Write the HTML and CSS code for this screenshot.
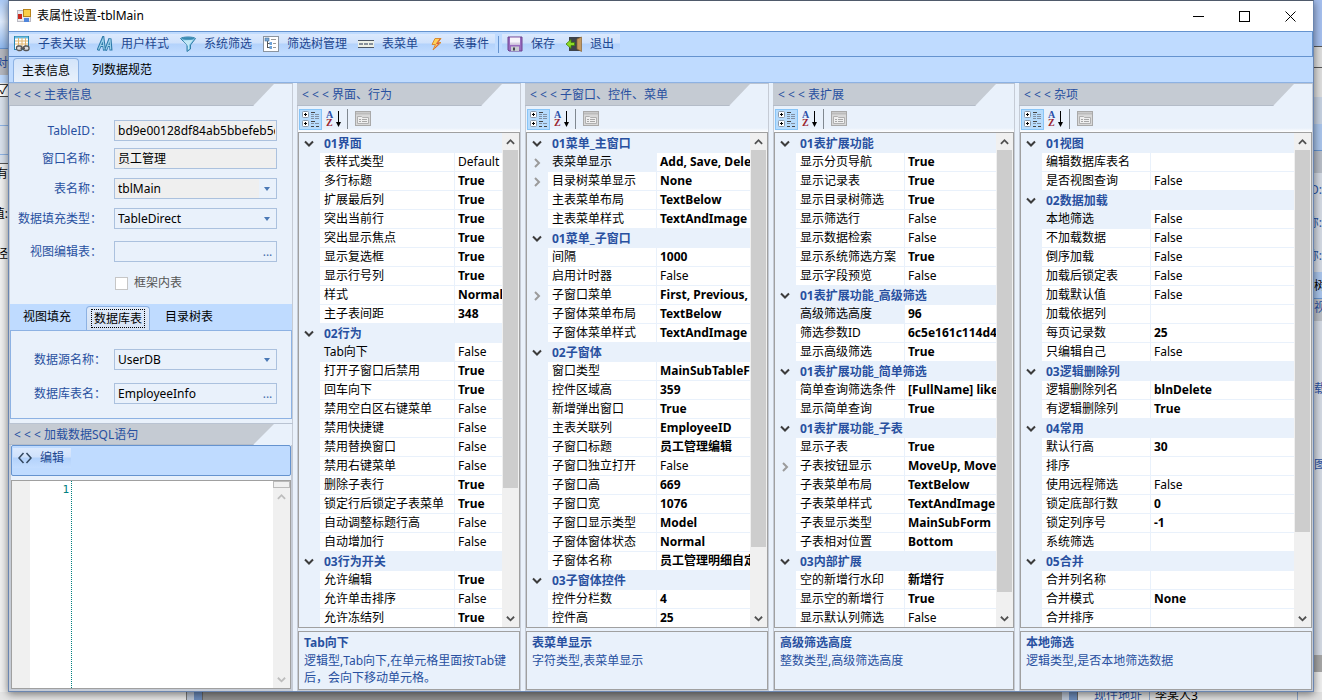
FILE: index.html
```html
<!DOCTYPE html>
<html lang="zh-CN">
<head>
<meta charset="utf-8">
<title>表属性设置-tblMain</title>
<link rel="stylesheet" href="styles.css">
</head>
<body>
<svg class="defs" aria-hidden="true">
  <symbol id="down" viewBox="0 0 10 8"><path d="M1 1.5 5 5.5 9 1.5" fill="none" stroke="currentColor" stroke-width="2"/></symbol>
  <symbol id="up" viewBox="0 0 10 8"><path d="M1 6 5 2 9 6" fill="none" stroke="currentColor" stroke-width="2"/></symbol>
  <symbol id="right" viewBox="0 0 10 10"><path d="M3 1 7 5 3 9" fill="none" stroke="currentColor" stroke-width="2"/></symbol>
  <symbol id="caret" viewBox="0 0 6 4"><path d="M0 0h6L3 4z" fill="#4a78b5"/></symbol>
  <symbol id="categorized" viewBox="0 0 18 18">
    <rect x="0.500" y="1.500" width="6" height="6" rx="1" fill="#fff" stroke="#8b98a8"/><path d="M2 4.500h3M3.500 3v3" stroke="#000"/>
    <rect x="0.500" y="10.500" width="6" height="6" rx="1" fill="#fff" stroke="#8b98a8"/><path d="M2 13.500h3M3.500 12v3" stroke="#000"/>
    <path d="M9 2.500h4M9 11.500h4M9 16.500h3M14 16.500h3" stroke="#444"/>
    <path d="M9 4.500h3M13 4.500h4M9 6.500h3M13 6.500h4M9 8.500h3M13 8.500h4M9 13.500h3M13 13.500h4" stroke="#8190a3"/>
  </symbol>
  <symbol id="sort" viewBox="0 0 16 18">
    <text x="0" y="8" font-family="Liberation Serif, serif" font-size="10" font-weight="700" fill="#2b4fa8">A</text>
    <text x="0" y="16" font-family="Liberation Serif, serif" font-size="10" font-weight="700" fill="#9a2430">Z</text>
    <path d="M12.500 1v13" stroke="#000" stroke-width="1"/><path d="M10 12h5l-2.500 5z" fill="#000"/>
  </symbol>
  <symbol id="pages" viewBox="0 0 16 16">
    <rect x="0.500" y="0.500" width="15" height="14" fill="#d8d8d8" stroke="#a9a9a9"/><path d="M1 2.500h14" stroke="#bcbcbc" stroke-width="2"/>
    <path d="M2.500 12.500v-7h4l1 1h6v6z" fill="#efefef" stroke="#b0b0b0"/><path d="M4 8.500h2M7 8.500h5M4 10.500h2M7 10.500h5" stroke="#a6a6a6"/>
  </symbol>
</svg>
<div class="desktop">
  <div class="behind behind-left" aria-hidden="true">
    <div class="bl-top"></div><div class="bl-tab">对</div><div class="bl-check">✓</div><div class="bl-lines"></div>
    <div class="bl-row">有</div><div class="bl-row">值:</div><div class="bl-row">径</div>
  </div>

  <main class="window">
    <header class="titlebar">
      <svg class="app-icon" viewBox="0 0 14 14"><rect x="0.500" y="1.500" width="13" height="11" fill="#e9e9ed" stroke="#b9b9c3"/><rect x="1" y="5" width="4" height="5" fill="#c92a20"/><rect x="6.500" y="0.500" width="7" height="7" fill="#f9cf47" stroke="#b7831b"/><rect x="7" y="9" width="5" height="4" fill="#4f86dc"/></svg>
      <h1>表属性设置-tblMain</h1>
      <button class="win-btn" aria-label="最小化"><svg viewBox="0 0 11 11"><path d="M0 5.500h11" stroke="#000"/></svg></button>
      <button class="win-btn" aria-label="最大化"><svg viewBox="0 0 11 11"><rect x="0.500" y="0.500" width="10" height="10" fill="none" stroke="#000"/></svg></button>
      <button class="win-btn" aria-label="关闭"><svg viewBox="0 0 11 11"><path d="M.5.500l10 10M10.500.500l-10 10" stroke="#000"/></svg></button>
    </header>

    <div class="toolbar">
      <div class="tool-group">
        <button class="tool"><svg viewBox="0 0 16 16"><rect x="0.500" y="0.500" width="14" height="13" fill="#fff" stroke="#2686b4"/><path d="M1 1.500h13" stroke="#6fbcdb" stroke-width="2"/><path d="M1 5h13M1 8h13M4.500 2v11M8 2v11M11.500 2v11" stroke="#e0b56c"/><rect x="2.500" y="10" width="5.500" height="4.500" rx="2" fill="#ddd" stroke="#555" stroke-width="1.300"/><rect x="9.500" y="10" width="5.500" height="4.500" rx="2" fill="#ddd" stroke="#555" stroke-width="1.300"/><path d="M6.500 12.200h4.500" stroke="#555" stroke-width="1.500"/></svg>子表关联</button>
        <button class="tool"><svg viewBox="0 0 16 16"><path d="M1 14.500 6 2.500 7.500 14.500M3 9.500h4" fill="none" stroke="#2c79a9" stroke-width="3"/><path d="M8.500 14.500 13 2.500 14 14.500M10 9.500h4" fill="none" stroke="#2c79a9" stroke-width="3"/><path d="M1.500 13.500 6 3 7.200 13.500M9 13.500l4-10.500.7 10.500M3.500 9.500h3M10 9.500h3" fill="none" stroke="#9bd0ea" stroke-width="1.200"/></svg>用户样式</button>
        <button class="tool"><svg viewBox="0 0 16 16"><path d="M.5 2.500C3 .5 13 .5 15.500 2.500L10.500 9v4L7 15.500V9z" fill="#86c8e6" stroke="#337fa8"/><path d="M3 4.500 8 10v3.500L9 13V9l4-5z" fill="#c3e8f6"/><ellipse cx="8" cy="2.500" rx="6" ry="1.300" fill="#3b8bb2"/></svg>系统筛选</button>
        <button class="tool"><svg viewBox="0 0 16 16"><rect x="0.500" y="0.500" width="15" height="15" fill="#fff" stroke="#8a94a0"/><path d="M4.500 5v7M5 7.500h3M5 11.500h3" stroke="#555" fill="none"/><rect x="2" y="2" width="4" height="3" fill="#7aa8d6" stroke="#456f9b" stroke-width=".6"/><rect x="6.500" y="6" width="2.500" height="3" fill="#6fa3d8"/><rect x="6.500" y="10" width="2.500" height="3" fill="#6fa3d8"/><path d="M8 3.500h5M10 7.500h3M10 11.500h3" stroke="#999"/></svg>筛选树管理</button>
        <button class="tool"><svg viewBox="0 0 16 16"><rect y="5" width="16" height="6" fill="#edf0e6"/><path d="M0 4.500h16M0 11.500h16" stroke="#4b5664"/><path d="M1 8h4M6 8h4M11 8h4" stroke="#86909b" stroke-width="2"/></svg>表菜单</button>
        <button class="tool"><svg viewBox="0 0 16 16"><path d="M6 2.500h6L9 6.500h3L4 14l2.500-5.500H3z" fill="#ffd257" stroke="#d78a35"/><path d="M11 3 7.500 7.500h2.500L6 12" fill="none" stroke="#d85a42"/></svg>表事件</button>
      </div>
      <span class="tool-sep"></span>
      <div class="tool-group">
        <button class="tool"><svg viewBox="0 0 16 16"><path d="M1 1h14v14H2l-1-1z" fill="#9a6cbf" stroke="#6c438f"/><rect x="3" y="1.500" width="10" height="7" fill="#f6f3fa"/><path d="M3 7.500h10" stroke="#d8d0e3" stroke-width="2"/><rect x="4" y="10.500" width="8" height="4.500" fill="#c9ccd1"/><rect x="6" y="11.500" width="2" height="3" fill="#454a50"/></svg>保存</button>
        <button class="tool"><svg viewBox="0 0 16 16"><path d="M3 1h12v14H3z" fill="#3d434b"/><path d="M11 3l4.500-2v14.500L11 13z" fill="#c49a61" stroke="#8a6330" stroke-width=".7"/><path d="M0 8l5-4.500v3h3.500v3H5v3z" fill="#8edb27" stroke="#41800d" stroke-width=".8"/></svg>退出</button>
      </div>
    </div>

    <nav class="tabs" role="tablist">
      <button class="tab tab-active" role="tab" aria-selected="true">主表信息</button>
      <button class="tab" role="tab" aria-selected="false">列数据规范</button>
    </nav>

    <div class="columns">
      <section class="panel side">
        <h2 class="panel-head"><span>&lt; &lt; &lt; 主表信息</span></h2>
        <form class="form">
          <div class="field"><label for="tid">TableID：</label><div class="box readonly"><input id="tid" value="bd9e00128df84ab5bbefeb5c" readonly></div></div>
          <div class="field tight"><label for="wname">窗口名称：</label><div class="box readonly"><input id="wname" value="员工管理" readonly></div></div>
          <div class="field"><label for="tname">表名称：</label><div class="box combo readonly"><select id="tname"><option>tblMain</option></select><svg><use href="#caret"/></svg></div></div>
          <div class="field"><label for="ftype">数据填充类型：</label><div class="box combo"><select id="ftype"><option>TableDirect</option></select><svg><use href="#caret"/></svg></div></div>
          <div class="field loose"><label for="vtable">视图编辑表：</label><div class="box"><input id="vtable"><button type="button" class="more" aria-label="选择视图编辑表">...</button></div></div>
          <div class="check-row"><input type="checkbox" id="inner"><label for="inner">框架内表</label></div>
        </form>
        <div class="subtabs" role="tablist">
          <button class="subtab" role="tab" aria-selected="false">视图填充</button>
          <button class="subtab subtab-active" role="tab" aria-selected="true"><span>数据库表</span></button>
          <button class="subtab" role="tab" aria-selected="false">目录树表</button>
        </div>
        <form class="subpage">
          <div class="field"><label for="src">数据源名称：</label><div class="box combo"><select id="src"><option>UserDB</option></select><svg><use href="#caret"/></svg></div></div>
          <div class="field"><label for="dbt">数据库表名：</label><div class="box"><input id="dbt" value="EmployeeInfo"><button type="button" class="more" aria-label="选择数据库表">...</button></div></div>
        </form>
        <h2 class="panel-head sql-head"><span>&lt; &lt; &lt; 加载数据SQL语句</span></h2>
        <div class="sql">
          <div class="sql-bar"><button class="edit"><svg viewBox="0 0 14 12"><path d="M5.500 1 1 6l4.500 5M8.500 1 13 6l-4.500 5" fill="none" stroke="#32475f" stroke-width="1.500"/></svg>编辑</button></div>
          <div class="editor">
            <div class="margin"></div><div class="line-no">1</div>
            <textarea aria-label="SQL语句"></textarea>
            <div class="editor-scroll"><span class="split"></span><svg><use href="#up"/></svg><i></i><svg><use href="#down"/></svg></div>
          </div>
        </div>
      </section>
      <section class="panel wide-names" data-grid="ui"></section>
      <section class="panel" data-grid="child"></section>
      <section class="panel" data-grid="extend"></section>
      <section class="panel" data-grid="misc"></section>
    </div>
  </main>

  <div class="behind behind-right" aria-hidden="true">
    <div class="br-a"></div><div class="br-b"></div><div class="br-c"></div><div class="br-d"></div><div class="br-e"></div>
    <div class="br-row">D:</div><div class="br-row">称:</div><div class="br-row">称:</div>
    <div class="br-tab">树</div><div class="br-head">视</div><div class="br-far">载</div><div class="br-far">图</div><div class="br-fill"></div><div class="br-scroll"></div><div class="br-end"></div>
  </div>
  <div class="behind behind-bottom" aria-hidden="true">
    <div class="bb-left"></div><div class="bb-edge"></div><div class="bb-mid"></div><div class="bb-edge"></div>
    <div class="bb-cell bb-label"><span>现住地址</span></div><div class="bb-cell bb-value"><span>李某人3</span></div><div class="bb-end"></div>
  </div>
</div>
<script src="app.js"></script>
</body>
</html>
```
FILE: styles.css
```css
* { box-sizing: border-box; }
html, body { height: 100%; }
body {
  margin: 0;
  overflow: hidden;
  font: 12px/18px "Noto Sans", "Noto Sans CJK SC", sans-serif;
  color: #000;
}
button, input, select, textarea { font: inherit; color: inherit; margin: 0; padding: 0; border: 0; background: none; border-radius: 0; outline: 0; }
h1, h2, p { margin: 0; font: inherit; }
svg { display: block; flex: none; }
.defs { display: none; }

.desktop { display: grid; grid-template: minmax(0, 1fr) 8px / 8px minmax(0, 1fr) 8px; height: 100vh; background: #dcdcdc; }
.window {
  display: flex; flex-direction: column; min-height: 0; z-index: 1;
  border: 1px solid #6b86b0; border-top-color: #4f5a6b; background: #e9f1fb;
  box-shadow: 0 2px 8px rgba(0, 0, 0, .5);
}

/* title bar */
.titlebar { display: flex; align-items: center; height: 30px; background: #fff; padding-left: 8px; flex: none; }
.app-icon { width: 14px; height: 14px; margin-right: 6px; }
.titlebar h1 { flex: 1; }
.win-btn { width: 46px; height: 30px; display: grid; place-items: center; }
.win-btn svg { width: 11px; height: 11px; }

/* command bar */
.toolbar { display: flex; align-items: center; height: 26px; flex: none; background: #bfdbff; border: 1px solid #6593cf; border-left: 0; }
.tool-group { display: flex; height: 20px; background: linear-gradient(#dbe9fd, #cfe1fb 45%, #b3d2fb 50%, #c3ddff); }
.tool { display: flex; align-items: center; gap: 8px; padding: 0 6px 0 5px; color: #1e4790; white-space: nowrap; }
.tool svg { width: 16px; height: 16px; }
.tool-sep { width: 1px; height: 17px; margin: 0 3px; background: #6593cf; }

/* main tabs */
.tabs { display: flex; align-items: flex-end; height: 26px; flex: none; padding-left: 4px; background: #bfdbff; border-bottom: 1px solid #8db2e3; }
.tab { height: 24px; padding: 0 13px; line-height: 22px; }
.tab-active { padding: 0 8px; border: 1px solid #8db2e3; border-bottom: 0; border-radius: 4px 4px 0 0; background: linear-gradient(#d3e4fa, #e9f1fb); }

.columns { flex: 1; min-height: 0; display: grid; grid-template-columns: 284fr 224fr 244fr 242fr 294fr; gap: 4px; }
.panel { display: flex; flex-direction: column; min-width: 0; min-height: 0; border: 1px solid #c5cbd5; border-top: 0; }
.panel-head { flex: none; height: 23px; margin: 0 -1px; border-top: 1px solid #b9c3d2; color: #2850a0; }
.panel-head span { display: block; height: 22px; line-height: 21px; margin-right: 19px; padding-left: 5px; background: #c5cbd3; border-bottom: 1px solid #b4bcc8; clip-path: polygon(0 0, 100% 0, calc(100% - 21px) 100%, 0 100%); white-space: nowrap; overflow: hidden; }

/* left column */
.form { padding: 14px 15px 12px 0; }
.field { display: grid; grid-template-columns: 94px minmax(0, 1fr); gap: 10px; align-items: center; margin-top: 9px; }
.field:first-child { margin-top: 0; }
.field.tight { margin-top: 7px; }
.field.loose { margin-top: 12px; }
.field label { text-align: right; color: #2850a0; line-height: 20px; padding-right: 2px; white-space: nowrap; }
.box { display: flex; height: 21px; border: 1px solid #abc1de; }
.box input { flex: 1; min-width: 0; width: 0; padding: 0 1px 0 3px; }
.box.readonly input { background: #efefef; }
.more { width: 17px; line-height: 18px; color: #4a70ae; }
.combo { display: grid; grid-template-columns: minmax(0, 1fr); align-items: center; }
.combo select, .combo svg { grid-area: 1 / 1; }
.combo select { appearance: none; width: 100%; height: 19px; padding-left: 3px; }
.combo.readonly { background: linear-gradient(#efefef, #efefef) 0 0 / calc(100% - 17px) 100% no-repeat; }
.combo svg { width: 6px; height: 4px; justify-self: end; margin-right: 6px; pointer-events: none; }
.check-row { display: flex; align-items: center; gap: 6px; margin-top: 12px; padding-left: 105px; color: #555; }
.check-row input { appearance: none; width: 13px; height: 13px; border: 1px solid #c6c6c6; background: #fff; }

.subtabs { display: flex; align-items: flex-end; height: 26px; flex: none; padding-left: 1px; background: #bfdbff; }
.subtab { height: 26px; padding: 0 13px; }
.subtab:first-child { padding-left: 12px; }
.subtab-active { height: 24px; padding: 0 4px; margin: 0 2px; border: 1px solid #8db2e3; border-bottom: 0; border-radius: 4px 4px 0 0; background: linear-gradient(#dfeafa, #d5e2f4); }
.subtab-active span { display: block; padding: 0 2px; border: 1px dotted #000; line-height: 17px; }
.subpage { border: 1px solid #8db2e3; height: 89px; flex: none; padding: 18px 14px 0 0; }
.subpage .field { grid-template-columns: 95px minmax(0, 1fr); gap: 8px; }
.subpage .field label { padding-right: 0; }
.subpage .field + .field { margin-top: 13px; }
.sql-head { margin-top: 4px; height: 22px; }
.sql-head span { height: 21px; }
.sql { flex: 1; min-height: 0; display: flex; flex-direction: column; gap: 4px; border: 1px solid #c5cbd5; border-top: 0; }
.sql-bar { height: 31px; flex: none; padding: 2px 0 0 1px; background: #bfdbff; border: 1px solid #6593cf; border-radius: 2px; }
.edit { display: flex; align-items: center; gap: 8px; height: 20px; padding: 0 7px 0 5px; color: #1e4790; background: linear-gradient(#dbe9fd, #cfe1fb 45%, #b3d2fb 50%, #c3ddff); }
.edit svg { width: 14px; height: 12px; }
.editor { flex: 1; min-height: 0; display: flex; background: #fff; border: 1px solid #a0a0a0; }
.margin { width: 18px; background: #f0f0f0; }
.line-no { width: 42px; padding-right: 2px; text-align: right; color: #008080; border-right: 1px dotted #008080; font-family: "DejaVu Sans Mono", monospace; font-size: 11px; line-height: 17px; }
.editor textarea { flex: 1; min-width: 0; resize: none; padding: 0 4px; }
.editor-scroll { width: 17px; display: flex; flex-direction: column; align-items: center; background: #f0f0f0; color: #bdbdbd; }
.editor-scroll .split { width: 17px; height: 7px; margin-bottom: 5px; border: 1px solid #bbb; }
.editor-scroll i { flex: 1; }
.editor-scroll svg { width: 9px; height: 8px; margin-bottom: 4px; }

/* property panels */
.panel-tools { display: flex; align-items: center; height: 26px; flex: none; padding: 0 1px; background: linear-gradient(#e9f1fb 85%, #fff); }
.panel-tools button { display: grid; place-items: center; width: 23px; height: 21px; }
.panel-tools .pressed { background: #b7dcfd; border: 1px solid #88c5f7; }
.panel-tools span { width: 1px; height: 20px; margin: 0 3px 0 2px; background: #808890; }
.i18 { width: 18px; height: 18px; }
.i16 { width: 16px; height: 18px; }
.ipg { width: 16px; height: 16px; }
.grid { flex: 1; min-height: 0; display: flex; border: 1px solid #a0a0a0; background: #e9f1fb; overflow: hidden; }
.rows { flex: 1; min-width: 0; overflow: hidden; padding-top: 1px; }
.rows table { width: 100%; table-layout: fixed; border-collapse: separate; border-spacing: 0; }
.c-gutter { width: 21px; }
.c-name { width: 108px; }
.wide-names .c-name { width: 134px; }
.rows tr { height: 19px; }
.rows th, .rows td { height: 19px; padding: 0; line-height: 18px; overflow: hidden; white-space: nowrap; text-align: left; font-weight: 400; }
.rows .name, .rows .value { background: #fff; border-bottom: 1px solid #e9f1fb; padding-left: 4px; }
.rows .value { border-left: 1px solid #e9f1fb; padding-left: 3px; }
.rows .selected .name { background: #e9f1fb; }
.rows .strong { font-weight: 700; }
.rows .group { font-weight: 700; color: #2850a0; padding-left: 4px; }
.rows .toggle { display: grid; place-items: center; width: 19px; height: 18px; color: #3c3c3c; }
.rows .toggle svg { width: 10px; height: 8px; }
.rows .sub { color: #9b9b9b; }
.rows .toggle.sub svg { height: 10px; }
.scroll { width: 17px; flex: none; display: flex; flex-direction: column; padding: 0 1px; background: #f0f0f0; color: #505050; }
.scroll button { display: grid; place-items: center; height: 17px; flex: none; }
.scroll button svg { width: 9px; height: 8px; }
.track { flex: 1; min-height: 0; }
.thumb { background: #cdcdcd; }
.help { height: 59px; flex: none; margin-top: 3px; padding: 2px 5px; border: 1px solid #a0a0a0; color: #2850a0; overflow: hidden; line-height: 17px; }
.help h3 { margin: 0; font-size: 12px; line-height: 18px; }

/* surfaces visible around the window */
.behind { overflow: hidden; min-width: 0; min-height: 0; white-space: nowrap; }
.behind-left { background: #f0f0f0; display: flex; flex-direction: column; align-items: stretch; }
.behind-left div { display: flex; justify-content: flex-end; flex: none; }
.bl-top { height: 49px; background: linear-gradient(#a9c8f4, #e0edff 45%, #8fb8ee); border-bottom: 1px solid #6593cf; }
.bl-tab { height: 34px; margin-bottom: 1px; padding-top: 5px; background: #b5b8c0; color: #2850a0; border-bottom: 8px solid #bfdbff; }
.bl-check { height: 13px; line-height: 10px; background: #fff; border: 1px solid #444; border-width: 1px 0; }
.bl-lines { height: 67px; background: repeating-linear-gradient(#d9e1ec 0 28px, #8db2e3 28px 29px); border-bottom: 1px solid #555; }
.bl-row { height: 40px; padding-top: 1px; }
.behind-right { background: #d3d9e3; display: flex; flex-direction: column; }
.behind-right div { flex: none; }
.br-a { height: 46px; background: #a5bfee; }
.br-b { height: 22px; background: #ddd; border: 1px solid #555; border-width: 1px 0; }
.br-c { height: 29px; background: #ddd; }
.br-d { height: 54px; background: linear-gradient(#c5d0e0 50%, #a9c4ea 50%); border-bottom: 1px solid #6593cf; }
.br-e { height: 22px; background: #b6bcc6; }
.br-row { height: 33px; padding-top: 8px; color: #2850a0; display: flex; justify-content: flex-end; }
.br-tab { height: 27px; padding-top: 5px; background: #a9c4ea; border-bottom: 1px solid #6593cf; }
.br-head { height: 22px; background: #b9bdc4; color: #2850a0; }
.br-far { height: 76px; padding-top: 62px; line-height: 12px; color: #2850a0; }
.behind-right .br-fill { flex: 1; }
.br-scroll { height: 17px; background: #a5a5a5; }
.br-end { height: 20px; background: #eee; }
.behind-bottom { grid-column: 1 / -1; display: flex; background: #e0e0e0; }
.bb-left { width: 187px; background: #e6e6e6; border-right: 1px solid #777; }
.bb-edge { width: 16px; background: linear-gradient(90deg, #b9c3d2 50%, #6b8ab8 50%); border-right: 1px solid #666; }
.bb-mid { flex: 1; background: #8f8f8f; }
.bb-cell { overflow: hidden; border-right: 1px solid #8ba3c7; display: flex; align-items: center; }
.bb-label { width: 72px; padding-left: 16px; color: #2850a0; }
.bb-value { width: 148px; padding-left: 5px; }
.bb-end { width: 24px; }
```
FILE: app.js
```javascript
// Row format: "#title" starts a group; otherwise "name|value".
// A leading ">" marks an expandable row, "@" the selected row, and "*" a changed (bold) value.
const grids = {
  ui: {
    title: "界面、行为", thumb: 73.5, help: ["Tab向下", "逻辑型,Tab向下,在单元格里面按Tab键后，会向下移动单元格。"],
    rows: ["#01界面", "表样式类型|Default", "多行标题|*True", "扩展最后列|*True", "突出当前行|*True", "突出显示焦点|*True", "显示复选框|*True", "显示行号列|*True", "样式|*Normal", "主子表间距|*348",
      "#02行为", "@Tab向下|False", "打开子窗口后禁用|*True", "回车向下|*True", "禁用空白区右键菜单|False", "禁用快捷键|False", "禁用替换窗口|False", "禁用右键菜单|False", "删除子表行|*True", "锁定行后锁定子表菜单|*True", "自动调整标题行高|False", "自动增加行|False",
      "#03行为开关", "允许编辑|*True", "允许单击排序|False", "允许冻结列|*True"]
  },
  child: {
    title: "子窗口、控件、菜单", thumb: 86.3, help: ["表菜单显示", "字符类型,表菜单显示"],
    rows: ["#01菜单_主窗口", ">@表菜单显示|*Add, Save, Delete", ">目录树菜单显示|*None", "主表菜单布局|*TextBelow", "主表菜单样式|*TextAndImage",
      "#01菜单_子窗口", "间隔|*1000", "启用计时器|False", ">子窗口菜单|*First, Previous, Next", "子窗体菜单布局|*TextBelow", "子窗体菜单样式|*TextAndImage",
      "#02子窗体", "窗口类型|*MainSubTableForm", "控件区域高|*359", "新增弹出窗口|*True", "主表关联列|*EmployeeID", "子窗口标题|*员工管理编辑", "子窗口独立打开|False", "子窗口高|*669", "子窗口宽|*1076", "子窗口显示类型|*Model", "子窗体窗体状态|*Normal", "子窗体名称|*员工管理明细自定义",
      "#03子窗体控件", "控件分栏数|*4", "控件高|*25"]
  },
  extend: {
    title: "表扩展", thumb: 96, help: ["高级筛选高度", "整数类型,高级筛选高度"],
    rows: ["#01表扩展功能", "显示分页导航|*True", "显示记录表|*True", "显示目录树筛选|*True", "显示筛选行|False", "显示数据检索|False", "显示系统筛选方案|*True", "显示字段预览|False",
      "#01表扩展功能_高级筛选", "@高级筛选高度|*96", "筛选参数ID|*6c5e161c114d4f", "显示高级筛选|*True",
      "#01表扩展功能_简单筛选", "简单查询筛选条件|*[FullName] like", "显示简单查询|*True",
      "#01表扩展功能_子表", "显示子表|*True", ">子表按钮显示|*MoveUp, MoveDown", "子表菜单布局|*TextBelow", "子表菜单样式|*TextAndImage", "子表显示类型|*MainSubForm", "子表相对位置|*Bottom",
      "#03内部扩展", "空的新增行水印|*新增行", "显示空的新增行|*True", "显示默认列筛选|False"]
  },
  misc: {
    title: "杂项", thumb: 83, help: ["本地筛选", "逻辑类型,是否本地筛选数据"],
    rows: ["#01视图", "编辑数据库表名|", "是否视图查询|False",
      "#02数据加载", "@本地筛选|False", "不加载数据|False", "倒序加载|False", "加载后锁定表|False", "加载默认值|False", "加载依据列|", "每页记录数|*25", "只编辑自己|False",
      "#03逻辑删除列", "逻辑删除列名|*blnDelete", "有逻辑删除列|*True",
      "#04常用", "默认行高|*30", "排序|", "使用远程筛选|False", "锁定底部行数|*0", "锁定列序号|*-1", "系统筛选|",
      "#05合并", "合并列名称|", "合并模式|*None", "合并排序|"]
  }
};

const icon = (id, cls = "") => `<svg class="${cls}"><use href="#${id}"/></svg>`;

function rowHtml(text) {
  if (text[0] === "#") {
    return `<tr><td><button class="toggle" aria-label="折叠">${icon("down")}</button></td><th class="group" colspan="2">${text.slice(1)}</th></tr>`;
  }
  const expandable = text[0] === ">";
  if (expandable) text = text.slice(1);
  const selected = text[0] === "@";
  if (selected) text = text.slice(1);
  let [name, value] = text.split("|");
  const strong = value[0] === "*";
  if (strong) value = value.slice(1);
  const toggle = expandable ? `<button class="toggle sub" aria-label="展开">${icon("right")}</button>` : "";
  return `<tr class="${selected ? "selected" : ""}"><td>${toggle}</td><th class="name" scope="row">${name}</th><td class="value${strong ? " strong" : ""}">${value}</td></tr>`;
}

document.querySelectorAll("[data-grid]").forEach(panel => {
  const g = grids[panel.dataset.grid];
  panel.innerHTML = `
    <h2 class="panel-head"><span>&lt; &lt; &lt; ${g.title}</span></h2>
    <div class="panel-tools">
      <button class="pressed" aria-label="按分类顺序">${icon("categorized", "i18")}</button>
      <button aria-label="按字母顺序">${icon("sort", "i16")}</button>
      <span></span>
      <button aria-label="属性页" disabled>${icon("pages", "ipg")}</button>
    </div>
    <div class="grid">
      <div class="rows"><table><colgroup><col class="c-gutter"><col class="c-name"><col></colgroup><tbody>${g.rows.map(rowHtml).join("")}</tbody></table></div>
      <div class="scroll"><button aria-label="向上滚动">${icon("up")}</button><div class="track"><div class="thumb" style="height:${g.thumb}%"></div></div><button aria-label="向下滚动">${icon("down")}</button></div>
    </div>
    <div class="help"><h3>${g.help[0]}</h3><p>${g.help[1]}</p></div>`;
});
```
